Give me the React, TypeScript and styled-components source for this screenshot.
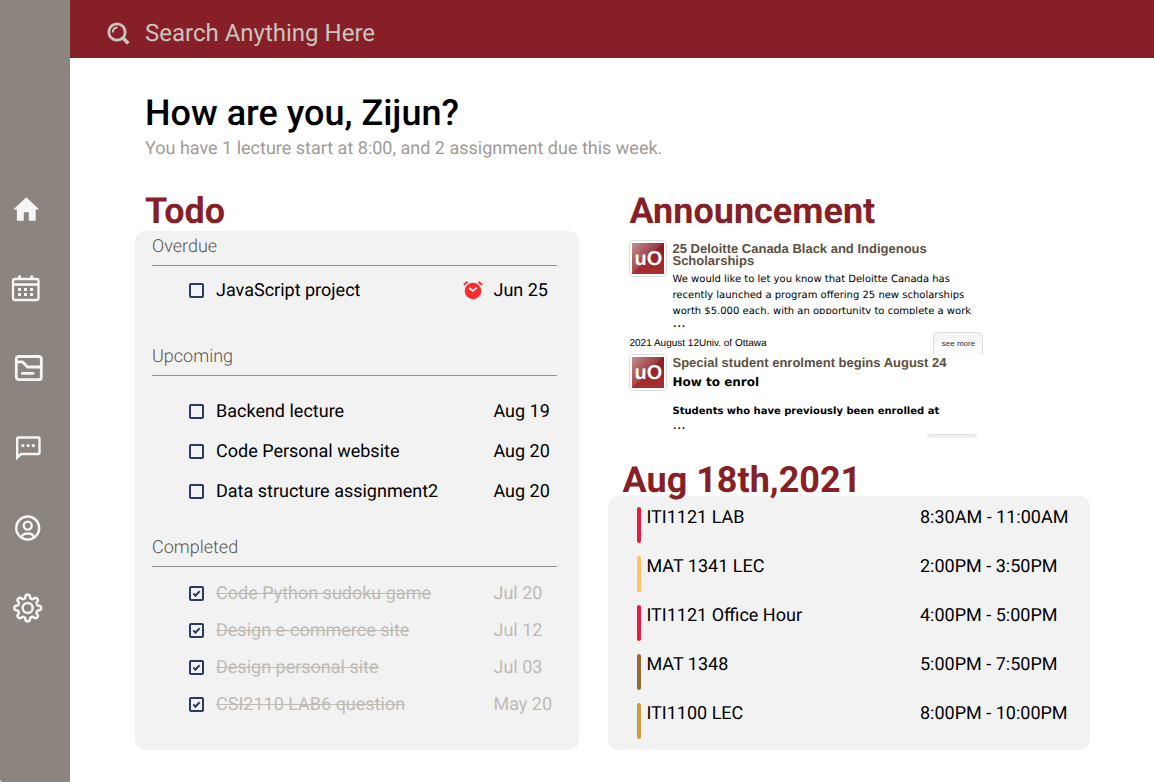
import React from "react";
import styled, { createGlobalStyle, css } from "styled-components";

const color = {
  garnet: "#871f28",
  taupe: "#8c847e",
  panel: "#f2f2f2",
  navy: "#2c3963",
  light: "#f5f5f5",
  done: "#c0bab5",
};

const GlobalStyle = createGlobalStyle`
  *, *::before, *::after { box-sizing: border-box; }
  body {
    margin: 0;
    background: #fff;
    color: #000;
    font-family: Roboto, "Liberation Sans", sans-serif;
    font-size: 18px;
    line-height: 21px;
    text-rendering: geometricPrecision;
  }
  h1, h2, h3, h4, p, ul { margin: 0; padding: 0; }
  ul { list-style: none; }
`;

const Page = styled.div`
  display: grid;
  grid-template-columns: 70px minmax(0, 1fr);
  min-height: 100vh;
`;

const Sidebar = styled.nav`
  display: flex;
  flex-direction: column;
  gap: 48px;
  padding: 193px 0 0 11px;
  border-bottom-left-radius: 3px;
  background: ${color.taupe};
`;

const NavLink = styled.a`
  display: block;
  width: 32px;
  height: 32px;
  color: ${color.light};

  svg { display: block; }
`;

const SearchBar = styled.label`
  display: flex;
  align-items: center;
  gap: 14px;
  padding: 19px 24px 11px 37px;
  background: ${color.garnet};
  color: #cbc3be;

  svg { flex: none; }
`;

const SearchInput = styled.input`
  flex: 1;
  min-width: 0;
  height: 28px;
  padding: 0;
  border: 0;
  outline: 0;
  background: transparent;
  color: inherit;
  font: 24px/28px Roboto, "Liberation Sans", sans-serif;
  text-rendering: inherit;

  &::placeholder { color: inherit; opacity: 1; }
`;

const Content = styled.main`
  padding: 34px 64px 32px 65px;
`;

const Greeting = styled.header`
  padding-left: 10px;
  margin-bottom: 36px;
`;

const Title = styled.h1`
  margin-bottom: 4px;
  font-size: 36px;
  line-height: 42px;
  font-weight: 500;
`;

const Subtitle = styled.p`
  color: #a19a94;
`;

const Columns = styled.div`
  display: grid;
  grid-template-columns: minmax(0, 12fr) minmax(0, 13fr);
  gap: 29px;
`;

const Column = styled.div`
  display: flex;
  flex-direction: column;
`;

/* Raised so that descenders show over the panel below. */
const SectionTitle = styled.h2<{ $indent: number }>`
  position: relative;
  z-index: 1;
  padding-left: ${(p) => p.$indent}px;
  color: ${color.garnet};
  font-size: 36px;
  line-height: 32px;
  font-weight: 700;
`;

const Panel = styled.section<{ $pad: string }>`
  flex: 1;
  padding: ${(p) => p.$pad};
  border-radius: 10px;
  background: ${color.panel};
`;

const TodoPanel = styled(Panel)`
  margin-top: 4px;
`;

const Group = styled.div<{ $after: number }>`
  padding-bottom: ${(p) => p.$after}px;
`;

const GroupTitle = styled.h3`
  padding-bottom: 8px;
  border-bottom: 1px solid #968e88;
  color: #5c534d;
  font-size: 18px;
  line-height: 21px;
  font-weight: 300;
`;

const TaskList = styled.ul<{ $before: number }>`
  padding: ${(p) => p.$before}px 0 0 37px;
`;

const Task = styled.li<{ $height: number; $done: boolean }>`
  display: flex;
  align-items: center;
  height: ${(p) => p.$height}px;
  ${(p) => p.$done && css`color: ${color.done};`}
`;

const TaskLabel = styled.label<{ $done: boolean }>`
  display: flex;
  flex: 1;
  align-items: center;
  gap: 12px;

  span {
    text-decoration: ${(p) => (p.$done ? "line-through" : "none")};
    text-decoration-thickness: 1px;
  }
`;

const Checkbox = styled.input`
  appearance: none;
  display: grid;
  place-items: center;
  width: 15px;
  height: 15px;
  margin: 0;
  border: 2px solid ${color.navy};
  border-radius: 2px;

  &:checked::before {
    content: "";
    width: 7px;
    height: 4px;
    margin-bottom: 2px;
    border: solid ${color.navy};
    border-width: 0 0 2px 2px;
    transform: rotate(-45deg);
  }
`;

const DueDate = styled.time`
  display: block;
  width: 64px;
  margin-left: 10px;
`;

const Announcements = styled.div`
  max-height: 198px;
  margin: 13px 0 26px;
  padding-left: 21px;
  overflow: hidden;
`;

const Card = styled.article<{ $width: number }>`
  display: grid;
  grid-template-columns: 38px minmax(0, 1fr);
  column-gap: 5px;
  align-items: start;
  max-width: ${(p) => p.$width}px;
`;

const LogoFrame = styled.div`
  width: 38px;
  height: 37px;
  padding: 2px;
  border: 1px solid #dcdcdc;
  border-radius: 4px;
  background: #fff;
`;

const Logo = styled.div`
  height: 31px;
  background:
    linear-gradient(135deg, rgba(255, 255, 255, 0.5) 0%, rgba(255, 255, 255, 0.12) 48%, transparent 50%),
    linear-gradient(#861d24, #a83030);
  color: #fff;
  font: bold 20px/33px "Liberation Sans", Arial, sans-serif;
  text-align: center;
`;

const CardTitle = styled.h3`
  padding: 3px 0 5px;
  color: #5b5042;
  font: bold 13px/12px "Liberation Sans", Arial, sans-serif;
`;

const CardBody = styled.div`
  height: 42px;
  overflow: hidden;
  font: 10px/16px "DejaVu Sans", Verdana, sans-serif;

  h4 {
    margin-bottom: 14px;
    font-size: 12px;
    line-height: 16px;
  }
`;

const More = styled.p`
  font: 14px/18px "DejaVu Sans", Verdana, sans-serif;
`;

const CardFooter = styled.footer`
  display: flex;
  grid-column: 1 / -1;
  justify-content: space-between;
  height: 22px;
  overflow: hidden;
  font: 10px/24px "Liberation Sans", Arial, sans-serif;
`;

const MoreButton = styled.button`
  width: 50px;
  height: 26px;
  margin-left: auto;
  padding: 0 0 3px;
  border: 1px solid #dedede;
  border-radius: 4px;
  background: linear-gradient(#f3f3f3, #fff);
  color: #333;
  font: 8px/20px "Liberation Sans", Arial, sans-serif;
`;

const ClassList = styled.ul`
  display: grid;
  gap: 13px;
`;

const ClassItem = styled.li`
  display: grid;
  grid-template-columns: 4px minmax(0, 1fr) 170px;
  column-gap: 5px;
  height: 36px;
`;

const Stripe = styled.span<{ $color: string }>`
  border-radius: 2px;
  background: ${(p) => p.$color};
`;

/* Eight rounded teeth: a flattened wave wrapped round a circle. */
const gearPath =
  Array.from({ length: 193 }, (_, i) => {
    const angle = (i / 192) * Math.PI * 2;
    const radius = 11.6 + 1.8 * Math.tanh(2 * Math.cos(angle * 8));
    const x = 16.7 + radius * Math.sin(angle);
    const y = 15 - radius * Math.cos(angle);
    return `${i ? "L" : "M"}${x.toFixed(2)} ${y.toFixed(2)}`;
  }).join("") + "Z";

const navItems = [
  {
    name: "Home",
    icon: <path d="M15.300 4.200 27.500 15.800v.7h-2.800v11.200h-6.900v-8.500h-5v8.500H5.900V16.500H3.100v-.7z" fill="currentColor" />,
  },
  {
    name: "Calendar",
    icon: (
      <g fill="none" stroke="currentColor" strokeWidth="2.300">
        <rect x="2" y="6" width="25.500" height="21" rx="2" />
        <path d="M2 11.500h25.500" strokeWidth="2.600" />
        <path d="M8.500 2.500V6M20.800 2.500V6" strokeWidth="3" />
        <path d="M7 16.500h3m3 0h3m3 0h3M7 21.500h3m3 0h3m3 0h3" strokeWidth="3" />
      </g>
    ),
  },
  {
    name: "Courses",
    icon: (
      <g fill="none" stroke="currentColor" strokeWidth="2.800" strokeLinecap="round" strokeLinejoin="round">
        <rect x="5.300" y="3.500" width="25" height="23.200" rx="2.500" />
        <path d="M5.500 8.800h6l5 5.200H30M11.200 20.300h11" />
      </g>
    ),
  },
  {
    name: "Messages",
    icon: (
      <g fill="none" stroke="currentColor" strokeWidth="2.400">
        <path d="M6.200 24.500V5.500Q6.200 4.500 7.200 4.500h20.300q1 0 1 1v14.500q0 1-1 1H10z" />
        <path d="M10.500 12.700h2.800m2.400 0h2.800m2.400 0h2.800" strokeWidth="2.800" />
      </g>
    ),
  },
  {
    name: "Profile",
    icon: (
      <g fill="none" stroke="currentColor" strokeWidth="2.400">
        <circle cx="16.700" cy="15" r="11.500" />
        <circle cx="16.700" cy="12.600" r="4" />
        <path d="M10.300 24.200q1.600-3.700 6.400-3.700t6.400 3.700" />
      </g>
    ),
  },
  {
    name: "Settings",
    icon: (
      <g fill="none" stroke="currentColor" strokeWidth="2.500" strokeLinejoin="round">
        <path d={gearPath} />
        <circle cx="16.700" cy="15" r="5" />
      </g>
    ),
  },
];

const SearchIcon = () => (
  <svg width="24" height="26" viewBox="0 0 24 26" fill="none" stroke="currentColor" aria-hidden="true">
    <circle cx="10" cy="12" r="8.200" strokeWidth="2.800" />
    <path d="M16 18l5.300 5.500" strokeWidth="3.600" />
    <path d="M5.800 12.500q0-4.700 4.700-5" strokeWidth="2" />
  </svg>
);

const AlarmIcon = () => (
  <svg width="20" height="20" viewBox="0 0 20 20" role="img" aria-label="Overdue">
    <circle cx="10" cy="11" r="8.300" fill="#fb2b2b" />
    <path d="M.8 5 4.500 1.800M19.200 5l-3.700-3.200" stroke="#fb2b2b" strokeWidth="1.800" fill="none" />
    <path d="m6.300 8 3.500 3 4-3.300" stroke="#fff" strokeWidth="1.700" fill="none" />
  </svg>
);

const groups = [
  {
    title: "Overdue",
    before: 4,
    after: 36,
    rowHeight: 40,
    done: false,
    late: true,
    tasks: [["JavaScript project", "Jun 25"]],
  },
  {
    title: "Upcoming",
    before: 15,
    after: 26,
    rowHeight: 40,
    done: false,
    late: false,
    tasks: [
      ["Backend lecture", "Aug 19"],
      ["Code Personal website", "Aug 20"],
      ["Data structure assignment2", "Aug 20"],
    ],
  },
  {
    title: "Completed",
    before: 8,
    after: 24,
    rowHeight: 37,
    done: true,
    late: false,
    tasks: [
      ["Code Python sudoku game", "Jul 20"],
      ["Design e-commerce site", "Jul 12"],
      ["Design personal site", "Jul 03"],
      ["CSI2110 LAB6 question", "May 20"],
    ],
  },
];

const classes = [
  ["ITI1121 LAB", "8:30AM - 11:00AM", "#e91a42"],
  ["MAT 1341 LEC", "2:00PM - 3:50PM", "#ffc163"],
  ["ITI1121 Office Hour", "4:00PM - 5:00PM", "#e91a42"],
  ["MAT 1348", "5:00PM - 7:50PM", "#966a35"],
  ["ITI1100 LEC", "8:00PM - 10:00PM", "#d19a3c"],
];

export default function App() {
  return (
    <>
      <GlobalStyle />
      <Page>
        <Sidebar aria-label="Main">
          {navItems.map((item) => (
            <NavLink key={item.name} href="#" aria-label={item.name}>
              <svg width="32" height="32" viewBox="0 0 32 32" aria-hidden="true">
                {item.icon}
              </svg>
            </NavLink>
          ))}
        </Sidebar>
        <div>
          <SearchBar>
            <SearchIcon />
            <SearchInput type="search" placeholder="Search Anything Here" aria-label="Search" />
          </SearchBar>
          <Content>
            <Greeting>
              <Title>How are you, Zijun?</Title>
              <Subtitle>You have 1 lecture start at 8:00, and 2 assignment due this week.</Subtitle>
            </Greeting>
            <Columns>
              <Column>
                <SectionTitle $indent={10}>Todo</SectionTitle>
                <TodoPanel $pad="5px 22px 0 17px">
                  {groups.map((group) => (
                    <Group key={group.title} $after={group.after}>
                      <GroupTitle>{group.title}</GroupTitle>
                      <TaskList $before={group.before}>
                        {group.tasks.map(([name, due]) => (
                          <Task key={name} $height={group.rowHeight} $done={group.done}>
                            <TaskLabel $done={group.done}>
                              <Checkbox type="checkbox" defaultChecked={group.done} />
                              <span>{name}</span>
                            </TaskLabel>
                            {group.late && <AlarmIcon />}
                            <DueDate>{due}</DueDate>
                          </Task>
                        ))}
                      </TaskList>
                    </Group>
                  ))}
                </TodoPanel>
              </Column>
              <Column>
                <SectionTitle $indent={21}>Announcement</SectionTitle>
                <Announcements>
                  <Card $width={354}>
                    <LogoFrame>
                      <Logo>uO</Logo>
                    </LogoFrame>
                    <div>
                      <CardTitle>25 Deloitte Canada Black and Indigenous Scholarships</CardTitle>
                      <CardBody>
                        <p>
                          We would like to let you know that Deloitte Canada has recently launched a program
                          offering 25 new scholarships worth $5,000 each, with an opportunity to complete a work
                        </p>
                      </CardBody>
                      <More>...</More>
                    </div>
                    <CardFooter>
                      <span>2021 August 12Univ. of Ottawa</span>
                      <MoreButton type="button">see more</MoreButton>
                    </CardFooter>
                  </Card>
                  <Card $width={348}>
                    <LogoFrame>
                      <Logo>uO</Logo>
                    </LogoFrame>
                    <div>
                      <CardTitle>Special student enrolment begins August 24</CardTitle>
                      <CardBody>
                        <h4>How to enrol</h4>
                        <p>
                          <b>Students who have previously been enrolled at</b>
                        </p>
                      </CardBody>
                      <More>...</More>
                    </div>
                    <CardFooter>
                      <MoreButton type="button" aria-label="See more" />
                    </CardFooter>
                  </Card>
                </Announcements>
                <SectionTitle $indent={14}>Aug 18th,2021</SectionTitle>
                <Panel $pad="11px 0 11px 29px">
                  <ClassList>
                    {classes.map(([name, time, stripe]) => (
                      <ClassItem key={name}>
                        <Stripe $color={stripe} />
                        <span>{name}</span>
                        <time>{time}</time>
                      </ClassItem>
                    ))}
                  </ClassList>
                </Panel>
              </Column>
            </Columns>
          </Content>
        </div>
      </Page>
    </>
  );
}
